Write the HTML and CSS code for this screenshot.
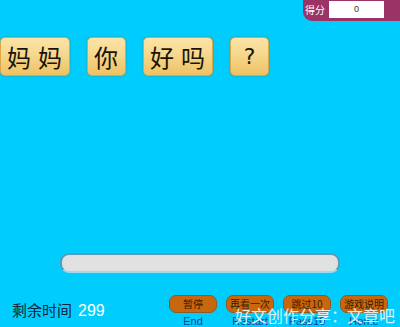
FILE: index.html
```html
<!DOCTYPE html>
<html lang="zh">
<head>
<meta charset="utf-8">
<link rel="stylesheet" href="styles.css">
</head>
<body>
<div class="page">
  <header class="top">
    <div class="score">
      <span class="score-label">得分</span>
      <span class="score-box">0</span>
    </div>
  </header>
  <div class="tiles">
    <div class="tile">妈妈</div>
    <div class="tile">你</div>
    <div class="tile">好吗</div>
    <div class="tile tile-q">?</div>
  </div>
  <div class="bar"></div>
  <footer class="bottom">
    <div class="timer"><span class="timer-label">剩余时间</span><span class="timer-num">299</span></div>
    <div class="controls">
      <div class="ctl"><div class="btn">暂停</div><div class="sub">End</div></div>
      <div class="ctl"><div class="btn">再看一次</div><div class="sub">Restart</div></div>
      <div class="ctl"><div class="btn">跳过10</div><div class="sub">Pass10</div></div>
      <div class="ctl"><div class="btn">游戏说明</div><div class="sub">Home</div></div>
    </div>
  </footer>
  <div class="watermark">好文创作分享：文章吧</div>
</div>
</body>
</html>
```
FILE: styles.css
```css
html, body {
  margin: 0;
  padding: 0;
}
body {
  background: #00cdfd;
  font-family: "Noto Sans CJK SC", "Noto Sans", sans-serif;
  overflow: hidden;
}
.page {
  position: relative;
  width: 400px;
  height: 327px;
  display: flex;
  flex-direction: column;
}
.top {
  display: flex;
  justify-content: flex-end;
  height: 21px;
}
.score {
  width: 97px;
  height: 21px;
  background: #9b3466;
  border-bottom-left-radius: 9px;
  display: flex;
  align-items: flex-start;
  box-sizing: border-box;
  padding: 1px 0 0 2px;
}
.score-label {
  color: #fff;
  font-size: 10px;
  line-height: 17px;
  white-space: nowrap;
  width: 21px;
}
.score-box {
  margin-left: 3px;
  width: 55px;
  height: 17px;
  background: #fff;
  color: #333;
  font-size: 9px;
  line-height: 17px;
  text-align: center;
  font-family: "Liberation Sans", sans-serif;
}
.tiles {
  display: flex;
  gap: 17px;
  margin-top: 16px;
  height: 39px;
}
.tile {
  box-sizing: border-box;
  min-width: 39px;
  height: 39px;
  padding-left: 6px;
  border: 1px solid #d9a84a;
  border-radius: 5px;
  background: linear-gradient(#fbe4a8 0%, #f6d78e 45%, #eec263 100%);
  box-shadow: 0 0 2px rgba(120, 90, 20, 0.5);
  font-size: 24px;
  line-height: 37px;
  letter-spacing: 7px;
  color: #1a1408;
}
.tile-q {
  padding-left: 0;
  text-align: center;
  font-family: "DejaVu Sans", sans-serif;
  font-size: 22px;
  letter-spacing: 0;
}
.bar {
  margin: 177px 0 0 60px;
  width: 280px;
  height: 26px;
  box-sizing: border-box;
  background: #e1e1e1;
  border: 2px solid #5a9ab8;
  border-bottom-color: #9fd8ef;
  border-radius: 9px;
}
.bottom {
  display: flex;
  align-items: flex-start;
  margin-top: 20px;
  padding-left: 12px;
}
.timer {
  width: 157px;
  padding-top: 8px;
  font-size: 15px;
  line-height: 18px;
}
.timer-label {
  color: #14253d;
}
.timer-num {
  color: #fff;
  margin-left: 6px;
  font-family: "Liberation Sans", sans-serif;
  font-size: 16px;
}
.controls {
  display: flex;
  gap: 9px;
  margin-top: 2px;
}
.ctl {
  width: 48px;
  display: flex;
  flex-direction: column;
  align-items: center;
}
.btn {
  box-sizing: border-box;
  width: 48px;
  height: 18px;
  background: #c9670e;
  border: 1px solid #8d5a26;
  border-radius: 7px;
  color: #3a1c00;
  font-size: 10px;
  line-height: 16px;
  text-align: center;
}
.sub {
  margin-top: 2px;
  color: #1b3f8f;
  font-family: "Liberation Sans", sans-serif;
  font-size: 11px;
  line-height: 12px;
}
.watermark {
  position: absolute;
  right: 5px;
  bottom: 1px;
  color: rgba(255, 255, 255, 0.85);
  font-size: 16px;
  line-height: 22px;
  white-space: nowrap;
}
```
